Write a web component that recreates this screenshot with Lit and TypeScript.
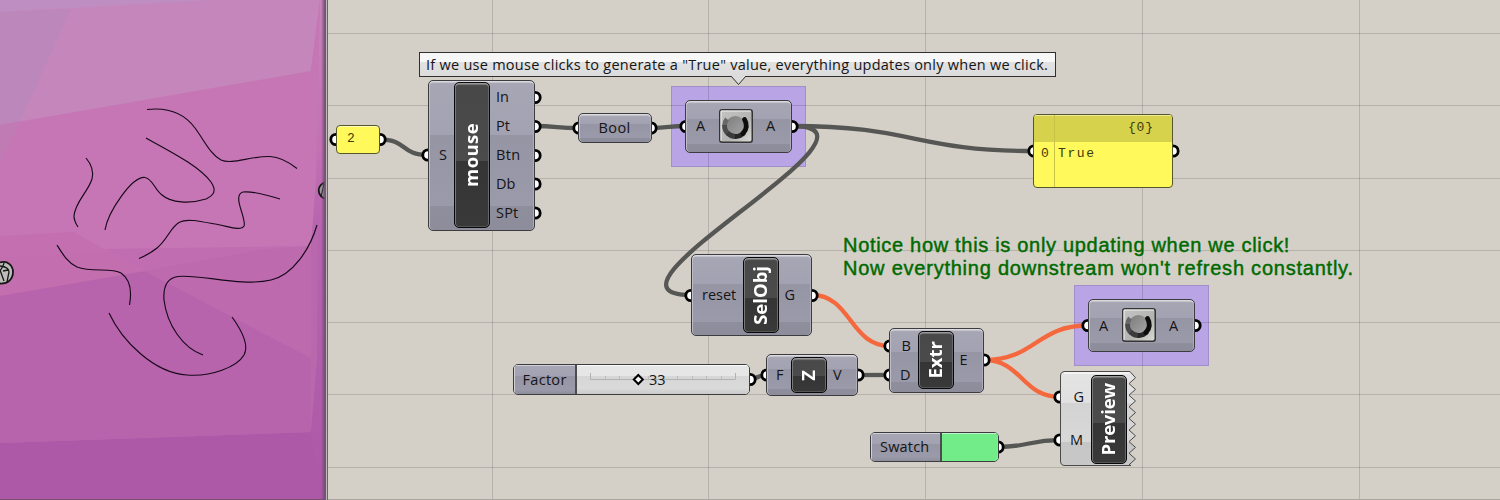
import { LitElement, html, svg, css, nothing } from "lit";
import { customElement, property } from "lit/decorators.js";

type Port = { text: string; top: number; left: number; gap?: number };
type NodeSpec = {
  x: number; y: number; w: number; h: number;
  kind?: string;
  ports: Port[];
  core?: { x: number; y: number; w: number; h: number; text?: string; gap?: number };
};

/* Component boxes; port and core offsets are relative to the box. */
const NODES: NodeSpec[] = [
  {
    x: 428, y: 80, w: 107, h: 151,
    ports: [
      { text: "S", top: 75, left: 11 },
      { text: "In", top: 17, left: 68 }, { text: "Pt", top: 46, left: 68 },
      { text: "Btn", top: 75, left: 68, gap: 0.4 }, { text: "Db", top: 104, left: 68 },
      { text: "SPt", top: 133, left: 68, gap: 0.2 },
    ],
    core: { x: 26, y: 2, w: 36, h: 146, text: "mouse", gap: 0.4 },
  },
  { x: 578, y: 113, w: 74, h: 30, ports: [{ text: "Bool", top: 15, left: 20.5, gap: 0.4 }] },
  {
    x: 685, y: 100, w: 107, h: 53,
    ports: [{ text: "A", top: 26, left: 11 }, { text: "A", top: 26, left: 81 }],
    core: { x: 34, y: 9, w: 34, h: 34 },
  },
  {
    x: 691, y: 254, w: 121, h: 82,
    ports: [{ text: "reset", top: 41, left: 11, gap: 0 }, { text: "G", top: 41, left: 93.5 }],
    core: { x: 52, y: 3, w: 36, h: 76, text: "SelObj" },
  },
  {
    x: 766, y: 354, w: 92, h: 42,
    ports: [{ text: "F", top: 21, left: 10 }, { text: "V", top: 21, left: 67 }],
    core: { x: 25, y: 3, w: 36, h: 36, text: "Z" },
  },
  {
    x: 889, y: 328, w: 95, h: 65,
    ports: [{ text: "B", top: 18, left: 12.5 }, { text: "D", top: 47, left: 11 }, { text: "E", top: 32, left: 70.5 }],
    core: { x: 29, y: 3, w: 36, h: 58, text: "Extr" },
  },
  {
    x: 1088, y: 299, w: 107, h: 53,
    ports: [{ text: "A", top: 27, left: 11 }, { text: "A", top: 27, left: 81 }],
    core: { x: 34, y: 9, w: 34, h: 34 },
  },
  {
    x: 1060, y: 371, w: 76, h: 95, kind: "torn",
    ports: [{ text: "G", top: 26, left: 13.5 }, { text: "M", top: 69, left: 10 }],
    core: { x: 31, y: 4, w: 36, h: 89, text: "Preview", gap: -0.2 },
  },
];

const WIRES = [
  "M380 139.5C408 139.5 400 155 428 155",
  "M535 126C556 126 558 128 578 128",
  "M652 128C668 128 670 126 685 126",
  "M792 126C914 126 914 151 1034 151",
  "M792 126C909 126 575 295 691 295",
  "M750 379C758 379 758 375 766 375",
  "M858 375H890",
  "M998 447C1029 447 1029 440 1060 440",
];
const HOT_WIRES = [
  "M812 295C851 295 850 346 890 346",
  "M984 360C1036 360 1036 325.500 1088 325.500",
  "M984 360C1022 360 1022 397 1060 397",
];
const GRIPS = [
  [336, 139.5], [380, 139.5], [428, 155], [535, 97.5], [535, 126.5], [535, 155.5], [535, 184], [535, 213],
  [579, 128], [651, 128], [686, 126.5], [792, 126.5], [1034, 151], [1173, 151],
  [691, 295.5], [812, 295.5], [750, 379.5], [767, 375], [858, 375], [890, 346], [890, 375],
  [984, 360], [1088, 325.5], [1195, 325.5], [1060, 397], [1060, 440], [998, 447],
];
const COLUMNS = [492.5, 708.5, 925.5, 1142.5, 1359.5];
const ROWS = [33.5, 105.5, 178.5, 250.5, 322.5, 394.5, 467.5];

@customElement("gh-node")
class GhNode extends LitElement {
  @property({ attribute: false }) spec!: NodeSpec;

  static styles = css`
    :host { display: block; width: 100%; height: 100%; position: relative; font: 14.5px/20px "Open Sans", "Noto Sans", sans-serif; color: #151515; }
    .body {
      position: absolute; inset: 0; box-sizing: border-box; border: 1px solid #3c3c40; border-radius: 5px;
      background: linear-gradient(#a7a6b4, #a3a2b2 36%, #9695a4 36%, #9b9aaa 84%, #8f8e9c 84%, #8d8c9a);
      box-shadow: inset 0 2px 1px -0.5px #ddddE2, inset 1px 0 0 #bbbac6, inset -1px 0 0 #aaa9b6;
    }
    .port { position: absolute; transform: translateY(-50%); white-space: pre; }
    .core {
      position: absolute; box-sizing: border-box; display: flex; align-items: center; justify-content: center;
      border: 1px solid #080808; border-radius: 5px;
      background: linear-gradient(#484848, #4b4b4b 54%, #353535 54%, #393939);
      box-shadow: inset 0 2px 1px -0.5px #a0a0a0, inset 1px 0 0 #777, inset -1px 0 0 #666, inset 0 -1px 0 #555;
    }
    .name { writing-mode: vertical-rl; transform: rotate(180deg); color: #fff; font: bold 18.5px/22px "Open Sans", "Noto Sans", sans-serif; white-space: pre; margin-right: 2px; }
    .dial { position: absolute; }
    .torn { position: absolute; inset: 0; overflow: visible; }
  `;

  render() {
    const { ports, core, kind, w, h } = this.spec;
    return html`
      ${kind === "torn" ? this.torn(w, h) : html`<div class="body"></div>`}
      ${ports.map((p) => html`<span class="port" style="left:${p.left}px;top:${p.top}px;letter-spacing:${p.gap ?? 0}px">${p.text}</span>`)}
      ${core?.text
        ? html`<div class="core" style="left:${core.x}px;top:${core.y}px;width:${core.w}px;height:${core.h}px"><span class="name" style="letter-spacing:${core.gap ?? 0}px">${core.text}</span></div>`
        : nothing}
      ${core && !core.text ? this.dial(core.x, core.y) : nothing}
    `;
  }

  dial(x: number, y: number) {
    return html`<svg class="dial" style="left:${x}px;top:${y}px" width="34" height="34" viewBox="0 0 34 34">
      <defs>
        <linearGradient id="face" x1="0" y1="0" x2="1" y2="1"><stop offset="0" stop-color="#c4c4c4"/><stop offset=".6" stop-color="#b4b4b2"/><stop offset="1" stop-color="#dcdcd8"/></linearGradient>
        <linearGradient id="hub" x1="0" y1="0" x2="1" y2="1"><stop offset="0" stop-color="#7c7c7c"/><stop offset="1" stop-color="#a6a6a6"/></linearGradient>
        <filter id="soft" x="-20%" y="-20%" width="140%" height="140%"><feGaussianBlur stdDeviation=".7"/></filter>
      </defs>
      <rect x=".75" y=".75" width="32.500" height="32.500" rx="2.500" fill="url(#face)" stroke="#343434" stroke-width="1.500"/>
      <path d="M2 32V2H32" fill="none" stroke="#f4f4f4"/>
      <g filter="url(#soft)">
        <circle cx="16.500" cy="16.500" r="9.500" fill="url(#hub)"/>
        <g fill="none" stroke-width="4.800">
          <path d="M8 10A11 11 0 0 0 5.500 17" stroke="#686868"/>
          <path d="M5.500 16A11 11 0 0 0 9.500 25" stroke="#4c4c4c"/>
          <path d="M8.500 24A11 11 0 0 0 17 27.500" stroke="#3a3a3a"/>
          <path d="M16 27.500A11 11 0 0 0 25 23.500" stroke="#252525"/>
          <path d="M24 24.500A11 11 0 0 0 25.500 10.500" stroke="#080808" stroke-linecap="round"/>
        </g>
      </g>
    </svg>`;
  }

  torn(w: number, h: number) {
    const teeth = Array.from({ length: 8 }, (_, i) => `L${w - 0.5} ${(6.8 + i * 11.6).toFixed(1)}L${w - 7} ${Math.min(h - 1, 12.6 + i * 11.6).toFixed(1)}`).join("");
    return html`<svg class="torn" width=${w} height=${h}>
      <defs><linearGradient id="pale" x1="0" y1="0" x2="0" y2="1">
        <stop offset="0" stop-color="#e4e4e4"/><stop offset=".34" stop-color="#e0e0e0"/><stop offset=".34" stop-color="#d3d3d3"/>
        <stop offset=".75" stop-color="#d8d8d8"/><stop offset=".75" stop-color="#c6c6c6"/><stop offset="1" stop-color="#c8c8c8"/>
      </linearGradient></defs>
      <path d="M5 .5H70${teeth}L71 ${h - 0.5}H5Q.5 ${h - 0.5} .5 ${h - 5}V5Q.5 .5 5 .5Z" fill="url(#pale)" stroke="#4a4a4a"/>
      <path d="M4 2H69" stroke="#fafafa" stroke-width="1.500"/>
    </svg>`;
  }
}

@customElement("rhino-view")
class RhinoView extends LitElement {
  static styles = css`
    :host { display: block; width: 328px; height: 500px; overflow: hidden; }
    svg { display: block; }
  `;
  render() {
    return html`<svg width="328" height="500" viewBox="0 0 328 500">
      <defs>
        <linearGradient id="edge" x1="0" x2="1"><stop offset="0" stop-color="#704a72" stop-opacity="0"/><stop offset="1" stop-color="#704a72" stop-opacity=".9"/></linearGradient>
        <linearGradient id="side" x1="0" y1="0" x2="0" y2="1"><stop offset="0" stop-color="#c684b9"/><stop offset=".3" stop-color="#c271b3"/><stop offset=".45" stop-color="#b765ae"/><stop offset="1" stop-color="#ac58a7"/></linearGradient>
      </defs>
      <rect width="328" height="500" fill="#c676b4"/>
      <path d="M0 0H320L311 71L0 125Z" fill="#c586bb"/>
      <path d="M0 12L71 9L20 121L0 125Z" fill="#bc87bb"/>
      <path d="M0 125L20 121L0 164Z" fill="#c07bb5"/>
      <path d="M0 0H215L0 12Z" fill="#be8dc2"/>
      <path d="M0 236L73 232L145 271L0 296Z" fill="#c46faf"/>
      <path d="M105 249L311 246V300L145 271Z" fill="#c16db1"/>
      <path d="M145 271L260 250L311 246V358Z" fill="#bd6aaf"/>
      <path d="M0 258L110 252L145 271L0 296Z" fill="#c36eaf"/>
      <path d="M0 296L145 271L311 358V432L0 443Z" fill="#b764ac"/>
      <path d="M0 443L311 432L328 432V500H0Z" fill="#ad59a8"/>
      <path d="M320 0H328V500H320L311 432V71Z" fill="url(#side)"/>
      <path d="M311 71L320 0L316 180L311 246Z" fill="#c576b4"/>
      <path d="M311 246L318 230L317 358L311 432Z" fill="#b968ad"/>
      <g fill="none" stroke="#160819" stroke-width="1.150">
        <path d="M147 109.500C169 107 184 113 195 128C204 140 210 154 221 160C232 165 250 156 270 156.500C280 157 290 163 297 168.500"/>
        <path d="M146 138C169 151 198 165 211 182C217 191 214 195 206 199C190 204 171 203 162 195C155 190 152 178 145 177.500C132 176 108 212 105 230"/>
        <path d="M86 158C92 165 94 171 92 179C88 192 75 202 74 216C74 221 76 224 78 227"/>
        <path d="M280 199C264 194 251 191 243 192C239 193 238 196 239 202C240 209 246 222 244 226C241 231 230 227 220 225C203 222 187 218 180 222C171 226 168 239 157 248C151 253 145 256 139 258.500"/>
        <path d="M57 245C62 253 67 262 77 267C92 273 111 267 121 273C130 279 132 291 129.500 305"/>
        <path d="M317 225C310 249 293 275 271 280C241 287 201 274 178 276.500C167 278 163 286 164 300C167 325 183 348 203 355"/>
        <path d="M109 313C122 341 154 373 187 375C211 377 237 367 244 355C250 344 240 328 232 317"/>
      </g>
      <g fill="#bcbcba" stroke="#171717">
        <path d="M0 262.500C8 260 13 266 13 272C13 279 8 284 0 283.500" stroke-width="1.800"/>
        <path d="M0 270L4 281M4 263L3 266L0 271M0 266Q9 267 9 272L7 282M3 271L8 270" fill="none" stroke-width="1.300"/>
        <circle cx="327" cy="190.500" r="8.300" fill="#989898" stroke-width="1.800"/>
        <path d="M321 197L324 184L328 191M323 184L328 187" fill="none"/>
      </g>
      <path d="M0 499.500H327" stroke="#76506f"/>
      <rect x="321" width="4" height="500" fill="url(#edge)"/>
      <rect x="324.500" width="1.500" height="500" fill="#76537a"/>
      <rect x="326" width="1" height="500" fill="#bcb9b4"/>
      <rect x="327" width="1" height="500" fill="#676765"/>
    </svg>`;
  }
}

@customElement("app-root")
class AppRoot extends LitElement {
  static styles = css`
    :host { display: block; width: 1500px; height: 500px; overflow: hidden; position: relative; background: #d4d0c8; font: 14.5px/20px "Open Sans", "Noto Sans", sans-serif; color: #151515; }
    .layout { display: flex; height: 500px; }
    .wires, .tip, .place, .group, .panel, .number, .slider, .swatch, .note { position: absolute; }
    .wires { left: 0; top: 0; clip-path: inset(0 0 0 328px); }
    .group { width: 133px; height: 79px; border: 1px solid #a18fca; background: #b9a4e6; }
    .g1 { left: 671px; top: 86px; }
    .g2 { left: 1074px; top: 285px; }
    .tip { left: 419px; top: 52px; }
    .tipbox { box-sizing: border-box; width: 637px; height: 25px; border: 1px solid #303030; background: linear-gradient(#f7f7f7 38%, #e2e2e2 38%, #dcdcdc); padding: 2px 0 0 6px; white-space: pre; letter-spacing: .26px; }
    .arrow { position: absolute; left: 311px; top: 24px; }
    .number { left: 336px; top: 125px; width: 44px; height: 29px; padding-left: 10px; box-sizing: border-box; line-height: 26px; }
    .number, .panel { box-sizing: border-box; border: 1px solid #56562c; border-radius: 4px; background: #fff95b; color: #3b3b0b; font-family: "Liberation Mono", monospace; font-size: 13px; box-shadow: inset 0 1px 0 #fffdb8; }
    .panel { left: 1033px; top: 114px; width: 140px; height: 74px; display: grid; grid-template: 27px 1fr / 21px 1fr; overflow: hidden; }
    .head { grid-column: 1 / 3; background: #d7d24c; box-shadow: inset 0 1px 0 #eeeb9c; text-align: right; padding-right: 18px; line-height: 25px; letter-spacing: .9px; }
    .index { text-align: center; padding-left: 2px; line-height: 23px; border-right: 1px solid #c8c348; margin-top: -27px; padding-top: 27px; }
    .value { padding-left: 3px; line-height: 23px; letter-spacing: 1.6px; }
    .slider, .swatch { box-sizing: border-box; border: 1px solid #3c3c40; border-radius: 5px; display: flex; overflow: hidden; }
    .slider { left: 513px; top: 364px; width: 237px; height: 31px; }
    .swatch { left: 870px; top: 432px; width: 129px; height: 30px; }
    .tag { box-sizing: border-box; border-right: 2px solid #4c4c50; background: linear-gradient(#a7a6b4, #a3a2b2 38%, #9695a4 38%, #9b9aaa 84%, #8f8e9c); box-shadow: inset 1px 1px 0 #d0d0d6; padding-left: 8.5px; line-height: 29px; letter-spacing: .3px; }
    .slider .tag { width: 63px; }
    .swatch .tag { width: 71px; line-height: 28px; letter-spacing: .2px; padding-left: 9px; }
    .track { flex: 1; background: linear-gradient(#e6e6e6 38%, #d6d6d6 38%, #dadada 80%, #cacaca); box-shadow: inset 0 1px 0 #fafafa; }
    .fill { flex: 1; background: #72ec88; box-shadow: inset 0 1px 0 #c0f3ca, inset -1px 0 0 #a0d9aa; }
    .track svg { display: block; }
    .note { left: 843px; top: 234px; color: #006a00; font: 20px/23px "Liberation Sans", Arial, sans-serif; -webkit-text-stroke: .45px #006a00; white-space: pre; }
    .line1 { letter-spacing: .69px; }
    .line2 { letter-spacing: .77px; }
  `;

  render() {
    return html`
      <div class="layout"><rhino-view></rhino-view></div>
      <div class="group g1"></div>
      <div class="group g2"></div>
      <svg class="wires" width="1500" height="500">
        <g stroke="#000" stroke-opacity=".14">
          ${COLUMNS.map((x) => svg`<path d="M${x} 0V500"/>`)}
          ${ROWS.map((y) => svg`<path d="M328 ${y}H1500"/>`)}
        </g>
        <path d="M328 499.500H1500" stroke="#aaa7a0"/>
        <g fill="none" stroke="#565654" stroke-width="4.300">${WIRES.map((d) => svg`<path d=${d}/>`)}</g>
        <g fill="none" stroke="#f5683d" stroke-width="4.300">${HOT_WIRES.map((d) => svg`<path d=${d}/>`)}</g>
        <g fill="#fff" stroke="#000" stroke-width="2.800">${GRIPS.map(([x, y]) => svg`<circle cx=${x} cy=${y} r="5.200"/>`)}</g>
      </svg>
      ${NODES.map((n) => html`<div class="place" style="left:${n.x}px;top:${n.y}px;width:${n.w}px;height:${n.h}px"><gh-node .spec=${n}></gh-node></div>`)}
      <div class="number">2</div>
      <div class="panel">
        <div class="head">{0}</div>
        <div class="index">0</div>
        <div class="value">True</div>
      </div>
      <div class="slider">
        <div class="tag">Factor</div>
        <div class="track"><svg width="172" height="29">
          <path d="M13.500 8V14.500H158.500V8" fill="none" stroke="#b2b2b2"/>
          ${[1, 2, 3, 4, 5, 6, 7, 8, 9].map((i) => svg`<path d="M${Math.round(13 + i * 14.5) + 0.5} 11V14" stroke="#bcbcbc"/>`)}
          <path d="M61.300 10L65.800 14.500L61.300 19L56.800 14.500Z" fill="#f5f5f5" stroke="#000" stroke-width="2"/>
          <text x="72" y="20" font-size="14.500" fill="#151515">33</text>
        </svg></div>
      </div>
      <div class="swatch"><div class="tag">Swatch</div><div class="fill"></div></div>
      <div class="tip">
        <div class="tipbox">If we use mouse clicks to generate a "True" value, everything updates only when we click.</div>
        <svg class="arrow" width="17" height="10"><path d="M1 0L8.500 8.500L16 0" fill="#dcdcdc" stroke="#303030"/><path d="M2 0H15" stroke="#dcdcdc"/></svg>
      </div>
      <div class="note"><div class="line1">Notice how this is only updating when we click!</div><div class="line2">Now everything downstream won't refresh constantly.</div></div>
    `;
  }
}
